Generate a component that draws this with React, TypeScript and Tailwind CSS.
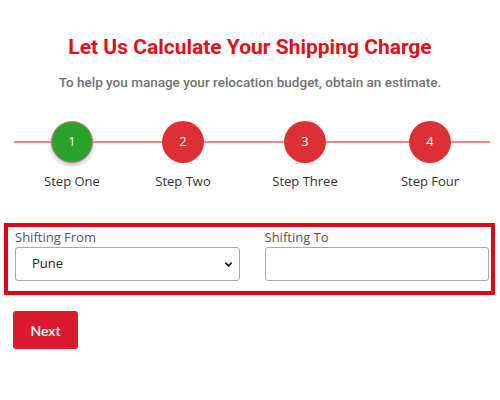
import { ChevronDown } from "lucide-react";

const steps = [
  { n: 1, label: "Step One", ml: "ml-[32px]", active: true },
  { n: 2, label: "Step Two", ml: "ml-[31px]", active: false },
  { n: 3, label: "Step Three", ml: "ml-[42px]", active: false },
  { n: 4, label: "Step Four", ml: "ml-[45px]", active: false },
];

export default function App() {
  return (
    <div className="w-[500px] h-[400px] bg-white overflow-hidden font-['Open_Sans',sans-serif]">
      {/* Heading */}
      <h1 className="pt-[35px] text-center text-[21px] leading-[24px] font-bold text-[#e0101a] font-['Roboto',sans-serif]">
        Let Us Calculate Your Shipping Charge
      </h1>
      <p className="mt-[13px] text-center text-[13.5px] leading-[20px] font-medium text-[#727272] font-['Roboto',sans-serif]">
        To help you manage your relocation budget, obtain an estimate.
      </p>

      {/* Stepper */}
      <div className="relative mt-[29px]">
        <div className="absolute left-[14px] right-[10px] top-[20px] h-[2px] bg-[#f08a8a]" />
        <div className="relative flex">
          {steps.map((s) => (
            <div key={s.n} className={`${s.ml} w-[80px] flex flex-col items-center`}>
              <div
                className={`w-[42px] h-[42px] rounded-full flex items-center justify-center text-white text-[13px] ${
                  s.active
                    ? "bg-[#2ba32b] border border-[#d9707e] shadow-[0_2px_4px_rgba(0,0,0,0.25)]"
                    : "bg-[#dc3035]"
                }`}
              >
                {s.n}
              </div>
              <span className="mt-[8px] text-[13px] leading-[20px] text-[#333] whitespace-nowrap">
                {s.label}
              </span>
            </div>
          ))}
        </div>
      </div>

      {/* Form box */}
      <div className="mt-[32px] ml-[4px] w-[491px] border-[4px] border-[#dd0a16] pl-[7px] pr-[2px] pb-[10px]">
        <div className="grid grid-cols-2 gap-[25px]">
          <div>
            <label className="block text-[13px] leading-[20px] text-[#555]">Shifting From</label>
            <div className="relative">
              <select className="appearance-none w-full h-[34px] border border-[#a9a9a9] rounded-[3px] pl-[16px] text-[13px] text-[#222] bg-white outline-none">
                <option>Pune</option>
              </select>
              <ChevronDown
                className="absolute right-[6px] top-[12px] w-[11px] h-[11px] text-[#222] pointer-events-none"
                strokeWidth={4}
              />
            </div>
          </div>
          <div>
            <label className="block text-[13px] leading-[20px] text-[#555]">Shifting To</label>
            <input className="w-full h-[34px] border border-[#a9a9a9] rounded-[3px] px-2 text-[13px] bg-white outline-none" />
          </div>
        </div>
      </div>

      {/* Next */}
      <button className="mt-[16px] ml-[13px] w-[65px] h-[38px] rounded-[3px] bg-[#dc1a2e] text-white text-[14px] font-semibold font-['Lato',sans-serif]">
        Next
      </button>
    </div>
  );
}
